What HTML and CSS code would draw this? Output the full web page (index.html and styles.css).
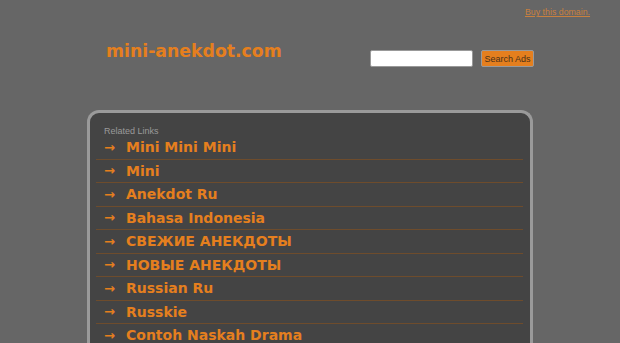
FILE: index.html
```html
<!DOCTYPE html>
<html>
<head>
<meta charset="utf-8">
<link rel="stylesheet" href="styles.css">
</head>
<body>
<div class="topbar"><a class="buy" href="#">Buy this domain.</a></div>
<div class="header">
  <div class="logo">mini-anekdot.com</div>
  <form class="search">
    <input class="search-input" type="text">
    <button class="search-btn" type="button">Search Ads</button>
  </form>
</div>
<div class="panel">
  <div class="related">Related Links</div>
  <ul class="links">
    <li class="link"><span class="arrow">→</span><a href="#">Mini Mini Mini</a></li>
    <li class="link"><span class="arrow">→</span><a href="#">Mini</a></li>
    <li class="link"><span class="arrow">→</span><a href="#">Anekdot Ru</a></li>
    <li class="link"><span class="arrow">→</span><a href="#">Bahasa Indonesia</a></li>
    <li class="link"><span class="arrow">→</span><a href="#">СВЕЖИЕ АНЕКДОТЫ</a></li>
    <li class="link"><span class="arrow">→</span><a href="#">НОВЫЕ АНЕКДОТЫ</a></li>
    <li class="link"><span class="arrow">→</span><a href="#">Russian Ru</a></li>
    <li class="link"><span class="arrow">→</span><a href="#">Russkie</a></li>
    <li class="link"><span class="arrow">→</span><a href="#">Contoh Naskah Drama</a></li>
  </ul>
</div>
</body>
</html>
```
FILE: styles.css
```css
html, body {
  margin: 0;
  padding: 0;
  background: #666666;
  height: 343px;
  overflow: hidden;
}
body {
  font-family: "DejaVu Sans", Verdana, sans-serif;
}
.topbar {
  display: flex;
  justify-content: flex-start;
  padding: 7px 0 0 525px;
  height: 13px;
}
.buy {
  font-family: "Liberation Sans", Arial, sans-serif;
  font-size: 8.8px;
  color: #c9803e;
  text-decoration: underline;
}
.header {
  display: flex;
  align-items: flex-start;
  padding: 20px 0 0 106px;
  height: 70px;
}
.logo {
  font-weight: bold;
  font-size: 17.3px;
  color: #e57f1e;
  width: 264px;
  line-height: 22px;
}
.search {
  display: flex;
  gap: 8px;
  margin: 10px 0 0 0;
}
.search-input {
  box-sizing: border-box;
  width: 103px;
  height: 17px;
  margin: 0;
  border: 1px solid #999;
  border-radius: 2px;
  background: #fff;
  padding: 0;
}
.search-btn {
  box-sizing: border-box;
  width: 53px;
  height: 17px;
  margin: 0;
  padding: 0;
  border: 1px solid #999;
  border-radius: 2px;
  background: #e57f1e;
  color: #4a3018;
  font-family: "Liberation Sans", Arial, sans-serif;
  font-size: 9px;
}
.panel {
  box-sizing: border-box;
  margin-left: 87px;
  width: 446px;
  height: 233px;
  border: 3px solid #9a9a9a;
  border-bottom: none;
  border-radius: 12px 12px 0 0;
  background: #444444;
  padding: 13px 7px 0 6px;
  overflow: hidden;
}
.related {
  font-family: "Liberation Sans", Arial, sans-serif;
  font-size: 9px;
  color: #9a9a9a;
  padding-left: 8px;
  line-height: 10px;
}
.links {
  list-style: none;
  margin: 0;
  padding: 0;
}
.link {
  display: flex;
  align-items: center;
  height: 22.5px;
  border-bottom: 1px solid #6e4c2c;
  padding-left: 8px;
}
.arrow {
  color: #e57f1e;
  font-size: 13px;
  font-weight: bold;
  width: 22px;
}
.link a {
  color: #e57f1e;
  font-weight: bold;
  font-size: 14px;
  text-decoration: none;
}
```
